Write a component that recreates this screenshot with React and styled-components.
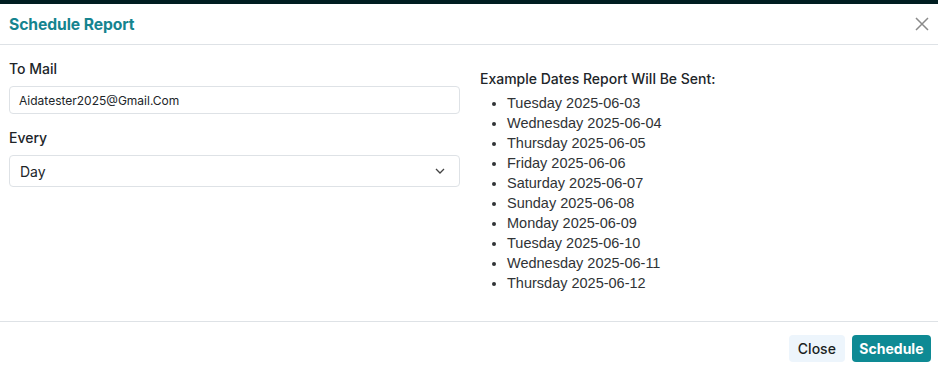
import React from 'react';
import styled, { createGlobalStyle } from 'styled-components';

const GlobalStyle = createGlobalStyle`
  html, body {
    margin: 0;
    padding: 0;
    background: #ffffff;
    font-family: Inter, "Liberation Sans", sans-serif;
    color: #212529;
  }
`;

const TopBar = styled.div`
  height: 4px;
  background: #001d21;
`;

const Modal = styled.div`
  width: 938px;
  height: 365px;
  display: flex;
  flex-direction: column;
  background: #fff;
`;

const Header = styled.div`
  height: 40px;
  display: flex;
  align-items: center;
  justify-content: space-between;
  padding: 0 8px 0 9px;
  border-bottom: 1px solid #dee2e6;
`;

const Title = styled.h5`
  margin: 0;
  font-size: 15.7px;
  font-weight: 700;
  color: #15848f;
  letter-spacing: -0.1px;
`;

const CloseX = styled.button`
  border: 0;
  background: none;
  padding: 0;
  width: 16px;
  height: 16px;
  display: flex;
  align-items: center;
  justify-content: center;
  cursor: pointer;
`;

const Body = styled.div`
  height: 276px;
  box-sizing: border-box;
  padding: 14px 9px 0;
  display: grid;
  grid-template-columns: 451px 1fr;
  column-gap: 20px;
  align-items: start;
`;

const Field = styled.div`
  display: flex;
  flex-direction: column;
  margin-top: ${p => (p.$first ? 0 : 14)}px;
`;

const Label = styled.label`
  font-size: 14px;
  font-weight: 500;
  line-height: 20px;
  margin-bottom: 7px;
  color: #212529;
`;

const Input = styled.div`
  height: ${p => p.$h}px;
  box-sizing: border-box;
  border: 1px solid #dee2e6;
  border-radius: 4px;
  display: flex;
  align-items: center;
  justify-content: space-between;
  padding: 0 14px 0 ${p => p.$pl || 9}px;
  font-size: ${p => p.$fs}px;
  color: #212529;
`;

const Heading = styled.div`
  font-size: 14px;
  font-weight: 500;
  line-height: 20px;
  margin-top: 10px;
`;

const DateList = styled.ul`
  margin: 4px 0 0;
  padding-left: 27px;
  font-family: "Liberation Sans", Arial, sans-serif;
  font-size: 14.5px;
  line-height: 20px;
  color: #303336;
`;

const Footer = styled.div`
  flex: 1;
  border-top: 1px solid #dee2e6;
  display: flex;
  justify-content: flex-end;
  align-items: center;
  gap: 7px;
  padding: 6px 7px 0 0;
`;

const Button = styled.button`
  height: 27px;
  padding: 0 ${p => (p.$primary ? 7.5 : 9)}px;
  border: 0;
  border-radius: 4px;
  font-family: inherit;
  font-size: 14px;
  font-weight: ${p => (p.$primary ? 700 : 500)};
  background: ${p => (p.$primary ? '#0e8a94' : '#edf5fc')};
  color: ${p => (p.$primary ? '#ffffff' : '#1b1f23')};
  cursor: pointer;
`;

const dates = [
  'Tuesday 2025-06-03',
  'Wednesday 2025-06-04',
  'Thursday 2025-06-05',
  'Friday 2025-06-06',
  'Saturday 2025-06-07',
  'Sunday 2025-06-08',
  'Monday 2025-06-09',
  'Tuesday 2025-06-10',
  'Wednesday 2025-06-11',
  'Thursday 2025-06-12',
];

export default function App() {
  return (
    <>
      <GlobalStyle />
      <TopBar />
      <Modal>
        <Header>
          <Title>Schedule Report</Title>
          <CloseX aria-label="Close">
            <svg width="14" height="14" viewBox="0 0 14 14">
              <path d="M1 1L13 13M13 1L1 13" stroke="#8a8a8a" strokeWidth="1.5" />
            </svg>
          </CloseX>
        </Header>
        <Body>
          <div>
            <Field $first>
              <Label>To Mail</Label>
              <Input $h={28} $fs={12}>Aidatester2025@Gmail.Com</Input>
            </Field>
            <Field>
              <Label>Every</Label>
              <Input $h={32} $fs={14} $pl={10}>
                Day
                <svg width="10" height="6" viewBox="0 0 10 6">
                  <path d="M1 1L5 5L9 1" stroke="#444" strokeWidth="1.3" fill="none" />
                </svg>
              </Input>
            </Field>
          </div>
          <div>
            <Heading>Example Dates Report Will Be Sent:</Heading>
            <DateList>
              {dates.map(d => (
                <li key={d}>{d}</li>
              ))}
            </DateList>
          </div>
        </Body>
        <Footer>
          <Button>Close</Button>
          <Button $primary>Schedule</Button>
        </Footer>
      </Modal>
    </>
  );
}
